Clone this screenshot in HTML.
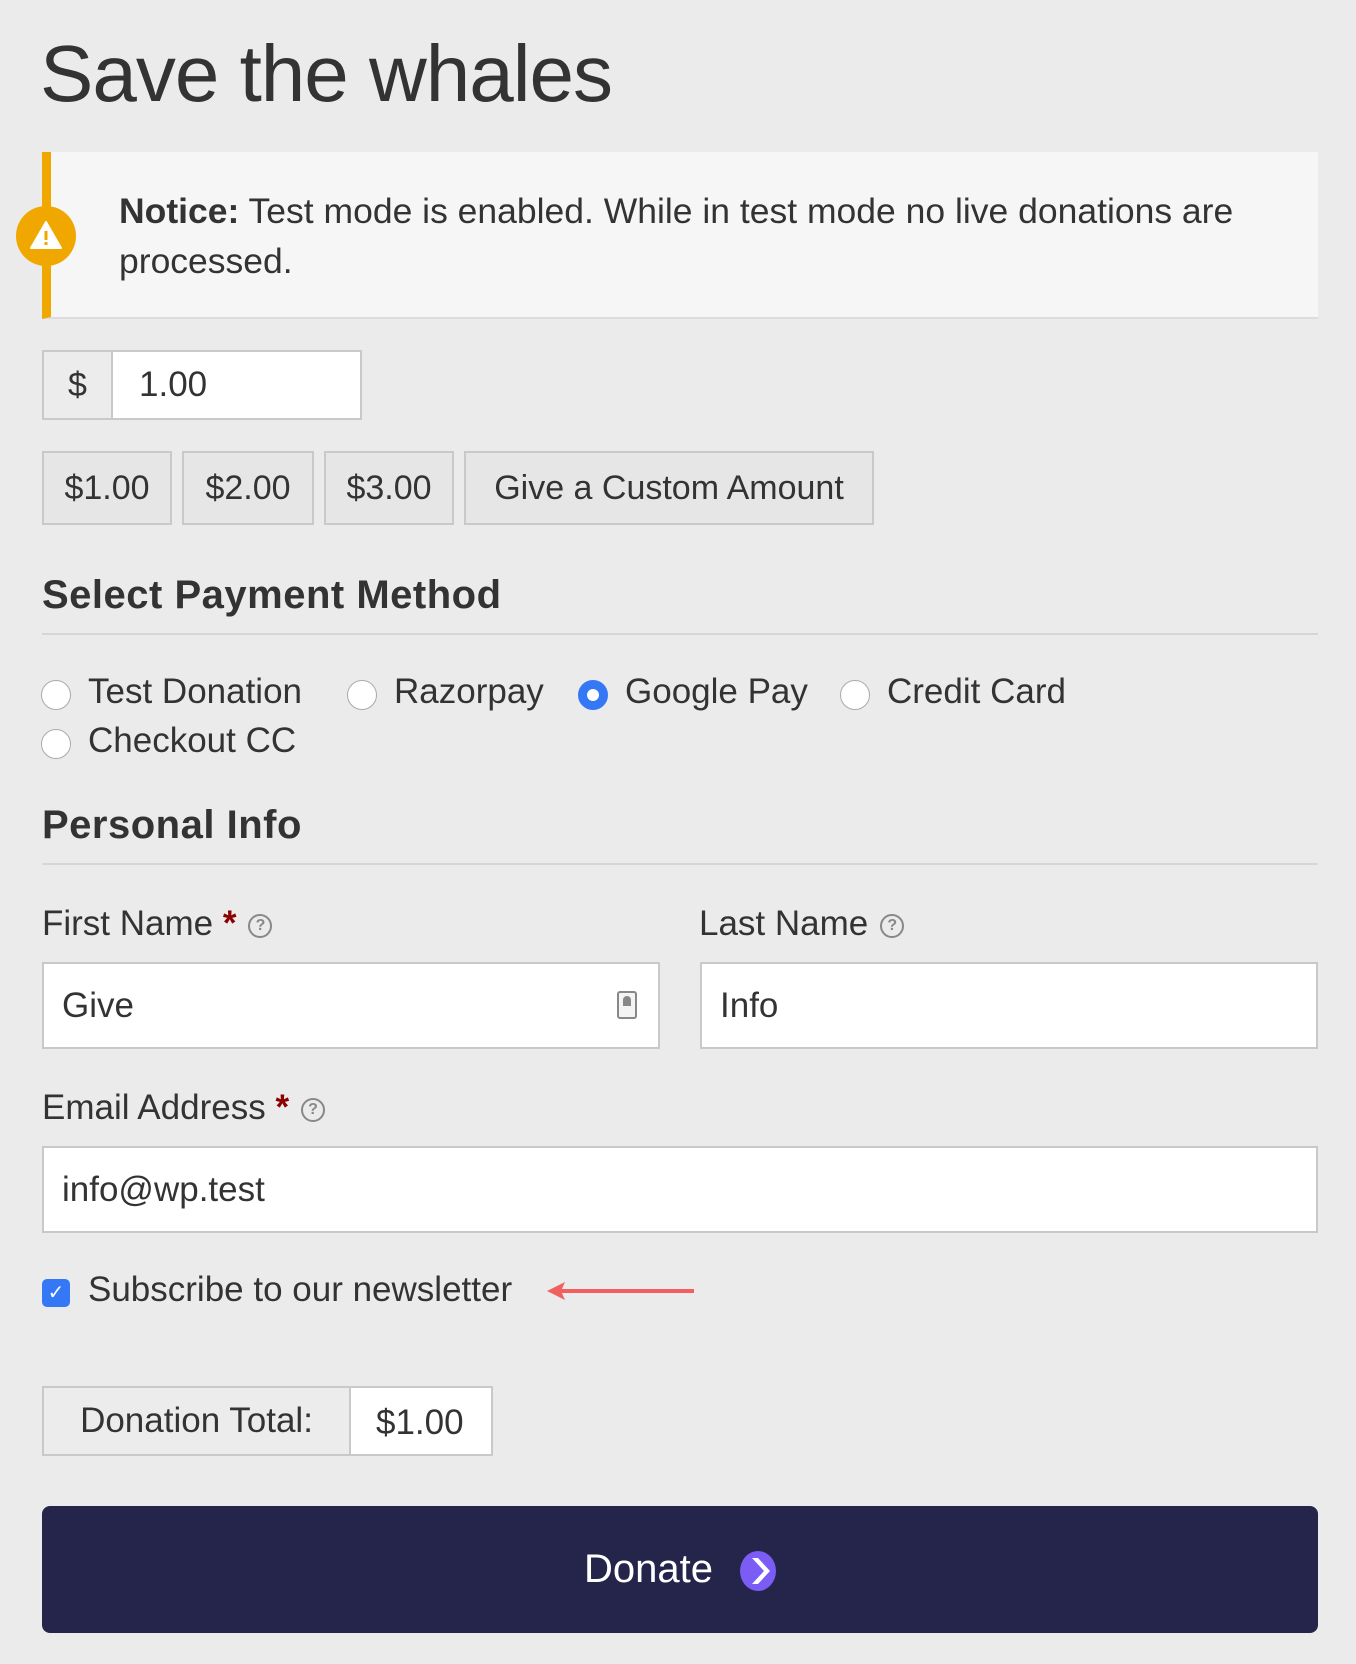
<!DOCTYPE html>
<html><head><meta charset="utf-8"><style>
*{box-sizing:border-box;margin:0;padding:0}
body{width:1356px;height:1664px;background:#ebebeb;font-family:"Liberation Sans",sans-serif;color:#333;position:relative;overflow:hidden}
.a{position:absolute;white-space:nowrap}
.box{position:absolute;border:2px solid #c9c9c9}
.btn{position:absolute;border:2px solid #c9c9c9;background:#e6e6e6;font-size:34px;display:flex;align-items:center;justify-content:center;color:#333}
.radio{position:absolute;width:30px;height:30px;border-radius:50%;background:#fff;border:1.5px solid #aaa}
.lbl{font-size:35px;color:#333}
.inp{position:absolute;background:#fff;border:2px solid #c9c9c9;font-size:35px;padding-left:18px;display:flex;align-items:center}
.q{display:inline-block;width:24px;height:24px;border:2px solid #888;border-radius:50%;font-size:16px;text-align:center;line-height:20px;color:#888;vertical-align:middle;margin-left:12px;font-weight:bold}
.star{color:#8b0000;font-weight:bold}
</style></head><body>
<div class="a" style="left:40px;top:28px;font-size:80px;color:#333;letter-spacing:-1px">Save the whales</div>

<div class="a" style="left:42px;top:152px;width:1276px;height:167px;background:#f6f6f6;border-left:9px solid #f0a800;border-bottom:2px solid #ddd"></div>
<div class="a" style="left:16px;top:206px;width:60px;height:60px;border-radius:50%;background:#f0a800"></div>
<svg class="a" style="left:29px;top:220px" width="34" height="30" viewBox="0 0 34 30"><path d="M17 2 L32 28 L2 28 Z" fill="#fff" stroke="#fff" stroke-linejoin="round" stroke-width="2"/><rect x="15.5" y="11" width="3" height="9" fill="#f0a800"/><rect x="15.5" y="22" width="3" height="3" fill="#f0a800"/></svg>
<div class="a" style="left:119px;top:186px;font-size:35.5px;line-height:50px;color:#333"><b>Notice:</b> Test mode is enabled. While in test mode no live donations are<br>processed.</div>

<div class="box" style="left:42px;top:350px;width:320px;height:70px;background:#fff"></div>
<div class="a" style="left:44px;top:352px;width:69px;height:66px;background:#ececec;border-right:2px solid #c9c9c9;font-size:34px;display:flex;align-items:center;justify-content:center">$</div>
<div class="a" style="left:139px;top:365px;font-size:35px">1.00</div>

<div class="btn" style="left:42px;top:451px;width:130px;height:74px">$1.00</div>
<div class="btn" style="left:182px;top:451px;width:132px;height:74px">$2.00</div>
<div class="btn" style="left:324px;top:451px;width:130px;height:74px">$3.00</div>
<div class="btn" style="left:464px;top:451px;width:410px;height:74px">Give a Custom Amount</div>

<div class="a" style="left:42px;top:573px;font-size:40px;font-weight:bold;color:#333;letter-spacing:0.5px">Select Payment Method</div>
<div class="a" style="left:42px;top:633px;width:1276px;height:2px;background:#d6d6d6"></div>

<div class="radio" style="left:41px;top:680px"></div><div class="a lbl" style="left:88px;top:672px">Test Donation</div>
<div class="radio" style="left:347px;top:680px"></div><div class="a lbl" style="left:394px;top:672px">Razorpay</div>
<div class="radio" style="left:578px;top:680px;background:#fff;border:9px solid #3478f6"></div><div class="a lbl" style="left:625px;top:672px">Google Pay</div>
<div class="radio" style="left:840px;top:680px"></div><div class="a lbl" style="left:887px;top:672px">Credit Card</div>
<div class="radio" style="left:41px;top:729px"></div><div class="a lbl" style="left:88px;top:721px">Checkout CC</div>

<div class="a" style="left:42px;top:803px;font-size:40px;font-weight:bold;color:#333;letter-spacing:0.5px">Personal Info</div>
<div class="a" style="left:42px;top:863px;width:1276px;height:2px;background:#d6d6d6"></div>

<div class="a lbl" style="left:42px;top:904px">First Name <span class="star">*</span><span class="q">?</span></div>
<div class="a lbl" style="left:699px;top:904px">Last Name<span class="q">?</span></div>
<div class="inp" style="left:42px;top:962px;width:618px;height:87px">Give</div>
<div class="a" style="left:617px;top:991px;width:20px;height:28px;border:2px solid #888;border-radius:3px;background:#f4f4f4"></div>
<div class="a" style="left:623px;top:996px;width:8px;height:10px;background:#888;border-radius:4px 4px 0 0"></div>
<div class="inp" style="left:700px;top:962px;width:618px;height:87px">Info</div>

<div class="a lbl" style="left:42px;top:1088px">Email Address <span class="star">*</span><span class="q">?</span></div>
<div class="inp" style="left:42px;top:1146px;width:1276px;height:87px">info@wp.test</div>

<div class="a" style="left:42px;top:1279px;width:28px;height:28px;border-radius:5px;background:#3478f6;color:#fff;font-size:20px;text-align:center;line-height:28px">✓</div>
<div class="a lbl" style="left:88px;top:1270px">Subscribe to our newsletter</div>
<svg class="a" style="left:545px;top:1280px" width="150" height="22"><line x1="14" y1="11" x2="149" y2="11" stroke="#f06060" stroke-width="4"/><path d="M2 11 L20 2 L16 11 L20 20 Z" fill="#f06060"/></svg>

<div class="box" style="left:42px;top:1386px;width:451px;height:70px;background:#fff"></div>
<div class="a" style="left:44px;top:1388px;width:307px;height:66px;background:#ececec;border-right:2px solid #c9c9c9;font-size:35px;display:flex;align-items:center;justify-content:center">Donation Total:</div>
<div class="a" style="left:376px;top:1403px;font-size:35px">$1.00</div>

<div class="a" style="left:42px;top:1506px;width:1276px;height:127px;background:#25244a;border-radius:8px"></div>
<div class="a" style="left:584px;top:1547px;font-size:40px;color:#fff">Donate</div>
<svg class="a" style="left:737px;top:1550px" width="42" height="42" viewBox="0 0 42 42"><ellipse cx="21" cy="21" rx="18" ry="20" fill="#7b5cf5"/><path d="M15 8 L27 21 L15 34 L21 34 L33 21 L21 8 Z" fill="#fff"/></svg>
</body></html>
